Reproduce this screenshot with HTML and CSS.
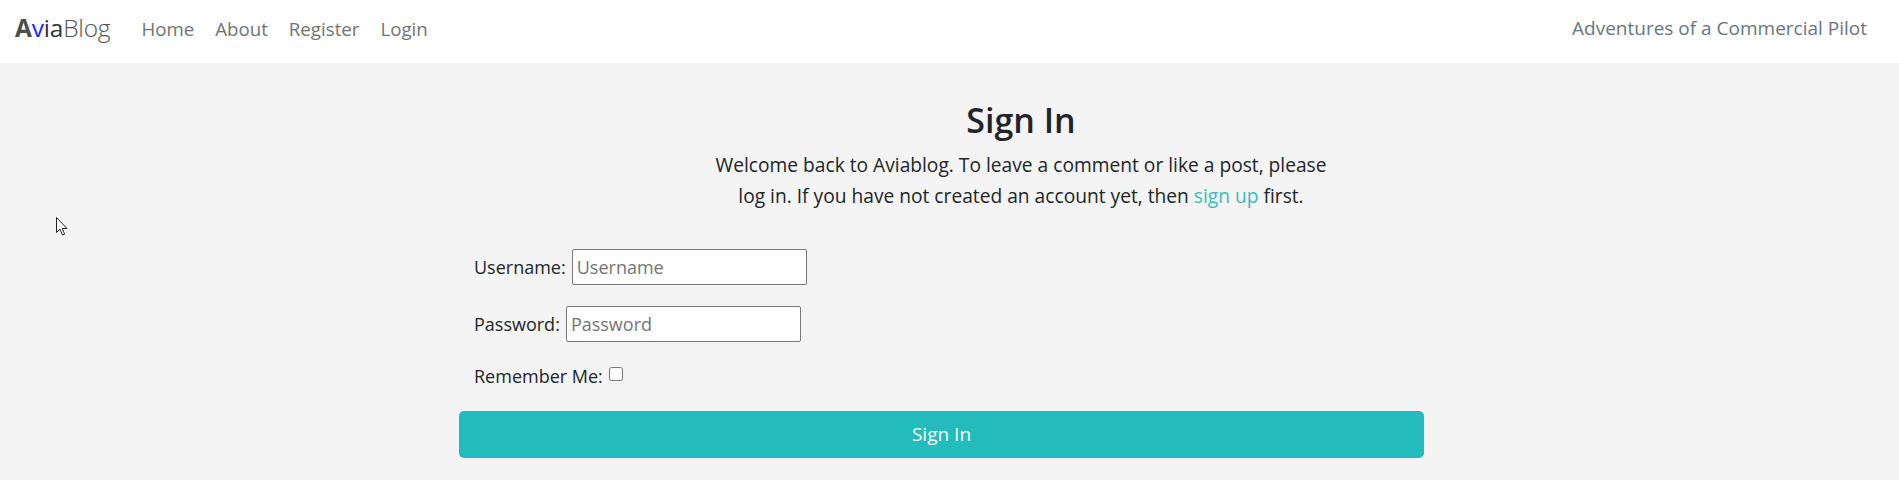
FILE: index.html
```html
<!DOCTYPE html>
<html lang="en">
<head>
<meta charset="utf-8">
<title>AviaBlog - Sign In</title>
<link rel="stylesheet" href="styles.css">
</head>
<body>
<header class="navbar">
  <div class="nav-left">
    <a class="brand" href="#"><span class="b-a">A</span><span class="b-v">v</span><span class="b-ia">ia</span><span class="b-blog">Blog</span></a>
    <nav class="links">
      <a href="#">Home</a>
      <a href="#">About</a>
      <a href="#">Register</a>
      <a href="#">Login</a>
    </nav>
  </div>
  <span class="tagline">Adventures of a Commercial Pilot</span>
</header>
<main class="page">
  <section class="intro">
    <h1>Sign In</h1>
    <p>Welcome back to Aviablog. To leave a comment or like a post, please<br>log in. If you have not created an account yet, then <a href="#">sign up</a> first.</p>
  </section>
  <form class="login">
    <div class="field"><label for="u">Username:</label><input id="u" class="user" type="text" placeholder="Username"></div>
    <div class="field"><label for="p">Password:</label><input id="p" class="pass" type="password" placeholder="Password"></div>
    <div class="field check"><label for="r">Remember Me:</label><input id="r" type="checkbox"></div>
    <button type="button" class="btn">Sign In</button>
  </form>
</main>
<svg class="cursor" width="12" height="19" viewBox="0 0 12 19"><path d="M0.5 0.5 L0.5 15.5 L4 12.2 L6.5 18 L8.6 17.1 L6.2 11.5 L11 11.5 Z" fill="#fff" stroke="#222" stroke-width="1"/></svg>
</body>
</html>
```
FILE: styles.css
```css
* { box-sizing: border-box; }
body {
  margin: 0;
  background: #f4f4f4;
  font-family: "Open Sans", "Noto Sans", sans-serif;
  color: #212529;
  position: relative;
  min-height: 480px;
}
a { text-decoration: none; }

.navbar {
  height: 63px;
  background: #fff;
  display: flex;
  align-items: center;
  justify-content: space-between;
  padding: 0 32px 7px 15px;
}
.nav-left { display: flex; align-items: center; }
.brand { font-size: 24.5px; letter-spacing: -0.2px; margin-right: 20.5px; line-height: 1; }
.b-a { color: #4d4d4d; font-weight: 700; }
.b-v { color: #1f1fff; }
.b-ia { color: #333; }
.b-blog { color: #555; font-weight: 300; }
.links { display: flex; }
.links a {
  color: #737373;
  font-size: 18.7px;
  padding: 0 10.5px;
}
.tagline { color: #6c757d; font-size: 19px; }

.intro {
  margin: 0 0 0 459px;
  width: 1124px;
  text-align: center;
  padding-top: 37px;
}
.intro h1 {
  font-size: 34px;
  font-weight: 600;
  margin: 0 0 8px;
  line-height: 1.2;
}
.intro p {
  font-size: 19.2px;
  line-height: 31.5px;
  margin: 0;
}
.intro p a { color: #3cbcbc; }

.login {
  margin: 37px 0 0 459px;
  width: 965px;
  display: flex;
  flex-direction: column;
}
.field {
  display: flex;
  align-items: center;
  padding-left: 15px;
  font-size: 18px;
  height: 36px;
  margin-bottom: 21px;
}
.field label { margin-right: 6px; }
.field input[type=text], .field input[type=password] {
  width: 235px;
  height: 36px;
  border: 1px solid #767676;
  border-radius: 2px;
  font-family: inherit;
  font-size: 18px;
  padding: 0 4px;
  background: #fff;
}
.field ::placeholder { color: #757575; }
.check { height: 24px; margin-top: 1px; margin-bottom: 23px; }
.check input { width: 14px; height: 14px; margin: 0 0 4px 0; }
.btn {
  height: 47px;
  border: none;
  border-radius: 5px;
  background: #23bbbb;
  color: #fff;
  font-family: inherit;
  font-size: 19px;
}
.cursor { position: absolute; left: 56px; top: 217px; }
```
